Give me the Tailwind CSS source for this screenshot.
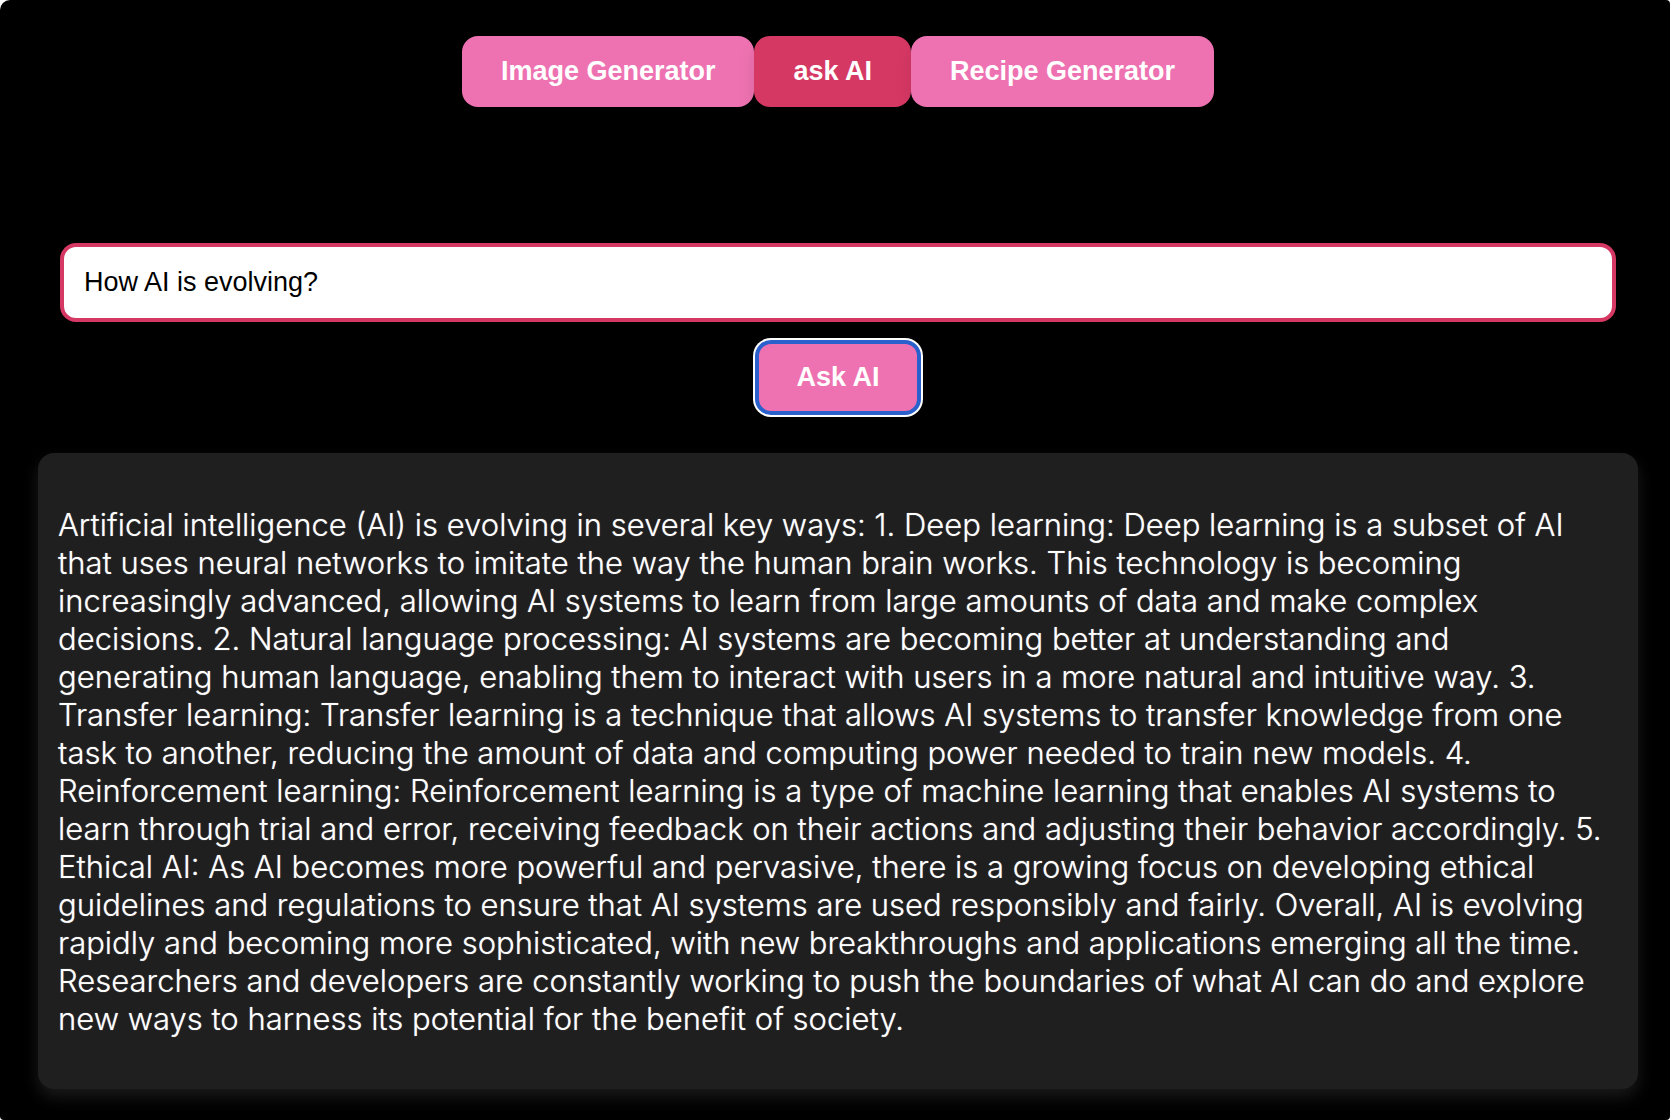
<!DOCTYPE html>
<html lang="en" class="bg-white">
<head>
<meta charset="utf-8">
<title>Ask AI</title>
<script src="https://cdn.jsdelivr.net/npm/@tailwindcss/browser@4"></script>
</head>
<body class="bg-white">
<div class="min-h-screen rounded-[4px] rounded-tl-[10px] bg-black pt-9 pr-8 pb-[31px] pl-[38px] font-['Liberation_Sans',Arial,sans-serif]">
  <nav class="flex justify-center text-[27px] leading-[31px] font-bold text-white">
    <button type="button" class="rounded-2xl bg-[#ee72b1] px-[39px] py-5 shadow-[0_8px_16px_rgba(0,0,0,0.1)]">Image Generator</button>
    <button type="button" class="rounded-2xl bg-[#d63864] px-[39px] py-5 shadow-[0_8px_16px_rgba(0,0,0,0.1)]">ask AI</button>
    <button type="button" class="rounded-2xl bg-[#ee72b1] px-[39px] py-5 shadow-[0_8px_16px_rgba(0,0,0,0.1)]">Recipe Generator</button>
  </nav>
  <main class="pt-[136px]">
    <form class="flex flex-col items-center px-[22px]">
      <input type="text" aria-label="Question" value="How AI is evolving?" class="w-full rounded-2xl border-4 border-[#d63864] bg-white px-5 py-5 text-[27px] leading-[31px] text-black outline-none">
      <button type="button" class="mt-[18px] rounded-2xl border-4 border-[#2a60cc] bg-[#ee72b1] px-[37px] py-[18px] text-[27px] leading-[31px] font-bold text-white ring-2 ring-white">Ask AI</button>
    </form>
    <section class="mt-[38px] rounded-2xl bg-[#1f1f1f] pt-[53px] pr-8 pb-[51px] pl-5 shadow-[0_8px_16px_rgba(255,255,255,0.1)]">
      <p class="font-['Inter',sans-serif] text-[31px] leading-[38px] font-light text-white [text-shadow:0_0_1px_rgba(255,255,255,0.6)]">
        Artificial intelligence (AI) is evolving in several key ways: 1. Deep learning: Deep learning is a subset of AI
        that uses neural networks to imitate the way the human brain works. This technology is becoming
        increasingly advanced, allowing AI systems to learn from large amounts of data and make complex
        decisions. 2. Natural language processing: AI systems are becoming better at understanding and
        generating human language, enabling them to interact with users in a more natural and intuitive way. 3.
        Transfer learning: Transfer learning is a technique that allows AI systems to transfer knowledge from one
        task to another, reducing the amount of data and computing power needed to train new models. 4.
        Reinforcement learning: Reinforcement learning is a type of machine learning that enables AI systems to
        learn through trial and error, receiving feedback on their actions and adjusting their behavior accordingly. 5.
        Ethical AI: As AI becomes more powerful and pervasive, there is a growing focus on developing ethical
        guidelines and regulations to ensure that AI systems are used responsibly and fairly. Overall, AI is evolving
        rapidly and becoming more sophisticated, with new breakthroughs and applications emerging all the time.
        Researchers and developers are constantly working to push the boundaries of what AI can do and explore
        new ways to harness its potential for the benefit of society.
      </p>
    </section>
  </main>
</div>
</body>
</html>
